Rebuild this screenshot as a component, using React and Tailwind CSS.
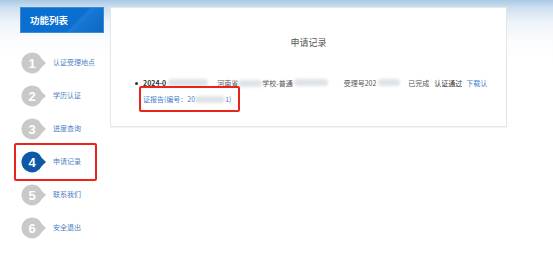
import React from 'react';

const menu = ['认证受理地点', '学历认证', '进度查询', '申请记录', '联系我们', '安全退出'];

function Badge({ n, active }) {
    const fill = active ? '#0d59a6' : '#c9c9c9';
    return (
        <svg width="26" height="22" viewBox="0 0 26 22" className="shrink-0">
            <path d="M11 0.5 A10.5 10.5 0 1 0 20.6 15.2 L25 11 L20.6 6.8 A10.5 10.5 0 0 0 11 0.5 Z" fill={fill} />
            <text x="11" y="15.5" textAnchor="middle" fontSize="13" fontWeight="700" fill="#fff" fontFamily="Liberation Sans, Arial, sans-serif">{n}</text>
        </svg>
    );
}

function Blur({ w }) {
    return <span className="inline-block h-[7px] rounded-sm bg-[#dfe2e7] blur-[1.5px]" style={{ width: w }}></span>;
}

export default function App() {
    return (
        <div className="w-[553px] h-[259px] overflow-hidden font-['Noto_Sans_CJK_SC',sans-serif] bg-[linear-gradient(to_bottom,#a9c9e6_0px,#cfe0f0_8px,#eef4fa_22px,#fbfcfe_42px,#ffffff_60px)]">
            <div className="flex items-start pl-[21px] pt-[8px]">
                {/* Sidebar */}
                <div className="w-[82px] shrink-0">
                    <div className="h-[24px] flex items-center pl-[9px] text-white text-[9.5px] font-bold bg-[linear-gradient(135deg,#0a6fd1_0%,#0a6fd1_65%,#1a7ad6_66%,#0b67c4_100%)] shadow-[0_0_0_1px_#3d8bd8]">
                        功能列表
                    </div>
                    <div className="mt-[14px]">
                        {menu.map((label, i) => (
                            <div key={label} className="relative h-[33px] flex items-center">
                                <Badge n={i + 1} active={i === 3} />
                                <span className="ml-[6px] text-[7px] text-[#4f7fbf]">{label}</span>
                                {i === 3 && (
                                    <div className="absolute left-[-7px] top-[-2px] w-[83px] h-[38px] border-2 border-[#e8241c] rounded-[2px]"></div>
                                )}
                            </div>
                        ))}
                    </div>
                </div>

                {/* Main panel */}
                <div className="ml-[7px] mt-[-1px] w-[397px] h-[120px] bg-white border border-[#e6e6e6] shadow-[0_1px_1px_rgba(0,0,0,0.04)]">
                    <div className="mt-[29px] text-center text-[9px] text-[#555] leading-[12px]">申请记录</div>
                    <div className="mt-[29px] pl-[24px] text-[7px] text-[#555] leading-[10px]">
                        <div className="flex items-center">
                            <span className="w-[3px] h-[3px] rounded-full bg-[#333] mr-[5px]"></span>
                            <span className="font-bold text-[#333]">2024-0</span>
                            <span className="ml-[2px]"><Blur w={40} /></span>
                            <span className="ml-[9px]">河南省</span>
                            <Blur w={24} />
                            <span>学校-普通</span>
                            <span className="ml-[1px]"><Blur w={34} /></span>
                            <span className="ml-[16px]">受理号202</span>
                            <span className="ml-[2px]"><Blur w={22} /></span>
                            <span className="ml-[8px]">已完成</span>
                            <span className="ml-[5px] text-[#333]">认证通过</span>
                            <span className="ml-[4px] text-[#3f7fd0]">下载认</span>
                        </div>
                        <div className="relative mt-[6px] ml-[8px] flex items-center text-[#4a82c8]">
                            <span>证报告(编号：20</span>
                            <Blur w={30} />
                            <span>1)</span>
                            <div className="absolute left-[-4px] top-[-8px] w-[101px] h-[26px] border-2 border-[#e8241c] rounded-[2px]"></div>
                        </div>
                    </div>
                </div>
            </div>
        </div>
    );
}
